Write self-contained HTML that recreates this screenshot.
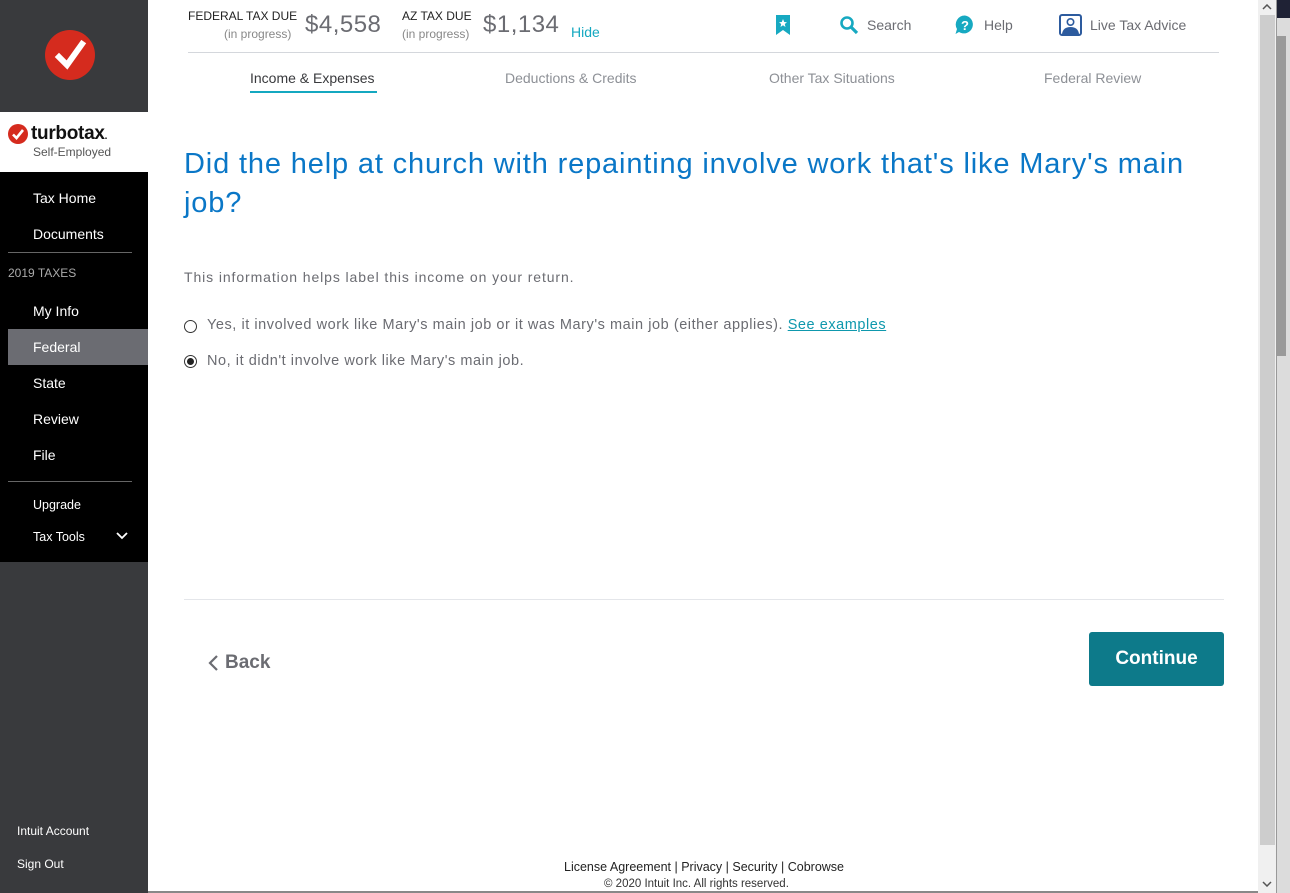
<!DOCTYPE html>
<html><head><meta charset="utf-8"><style>
*{margin:0;padding:0;box-sizing:border-box}
body{width:1290px;height:893px;overflow:hidden;font-family:"Liberation Sans",sans-serif;background:#fff;position:relative}
.side{position:absolute;left:0;top:0;width:148px;height:893px;background:#393a3d}
.logo{position:absolute;left:45px;top:30px;width:50px;height:50px;border-radius:50%;background:#d52b1e}
.brand{position:absolute;left:0;top:112px;width:148px;height:60px;background:#fff}
.nav{position:absolute;left:0;top:172px;width:148px;height:390px;background:#000}
.nav .it{position:absolute;left:33px;color:#fff;font-size:14px}
.nav .sm{font-size:12.5px}
.hr{position:absolute;left:8px;width:124px;height:1px;background:#666}
.abs{position:absolute}
.gray{color:#6b6c72}
</style></head><body>
<div class="side">
 <div class="logo"><svg width="50" height="50" viewBox="0 0 50 50"><path d="M14 27 L22 35 L37 14" stroke="#fff" stroke-width="6" fill="none" stroke-linecap="square"/></svg></div>
 <div class="brand">
  <svg class="abs" style="left:8px;top:12px" width="20" height="20" viewBox="0 0 20 20"><circle cx="10" cy="10" r="10" fill="#d52b1e"/><path d="M5 10.5 L8.5 14 L15 6" stroke="#fff" stroke-width="2.6" fill="none"/></svg>
  <div class="abs" style="left:31px;top:11px;font-size:19px;font-weight:bold;color:#111;letter-spacing:-0.3px">turbotax<span style="font-size:10px">.</span></div>
  <div class="abs" style="left:33px;top:33px;font-size:12px;color:#555">Self-Employed</div>
 </div>
 <div class="nav">
  <div class="it" style="top:18px">Tax Home</div>
  <div class="it" style="top:54px">Documents</div>
  <div class="hr" style="top:80px"></div>
  <div class="it" style="left:8px;top:94px;font-size:12px;color:#aaa">2019 TAXES</div>
  <div class="it" style="top:131px">My Info</div>
  <div class="abs" style="left:8px;top:157px;width:140px;height:36px;background:#6b6c72"></div>
  <div class="it" style="top:167px">Federal</div>
  <div class="it" style="top:203px">State</div>
  <div class="it" style="top:239px">Review</div>
  <div class="it" style="top:275px">File</div>
  <div class="hr" style="top:309px"></div>
  <div class="it sm" style="top:326px">Upgrade</div>
  <div class="it sm" style="top:358px">Tax Tools</div>
  <svg class="abs" style="left:116px;top:360px" width="12" height="8" viewBox="0 0 12 8"><path d="M1 1 L6 6 L11 1" stroke="#fff" stroke-width="1.8" fill="none"/></svg>
 </div>
 <div class="abs" style="left:17px;top:824px;color:#fff;font-size:12px">Intuit Account</div>
 <div class="abs" style="left:17px;top:857px;color:#fff;font-size:12px">Sign Out</div>
</div>

<div class="abs" style="left:188px;top:9px;font-size:12px;color:#222">FEDERAL TAX DUE</div>
<div class="abs gray" style="left:224px;top:27px;font-size:12px;color:#888">(in progress)</div>
<div class="abs" style="left:305px;top:11px;font-size:24px;color:#6b6c72;letter-spacing:0.5px">$4,558</div>
<div class="abs" style="left:402px;top:9px;font-size:12px;color:#222">AZ TAX DUE</div>
<div class="abs" style="left:402px;top:27px;font-size:12px;color:#888">(in progress)</div>
<div class="abs" style="left:483px;top:11px;font-size:24px;color:#6b6c72;letter-spacing:0.5px">$1,134</div>
<div class="abs" style="left:571px;top:24px;font-size:14px;color:#14a8c0">Hide</div>

<svg class="abs" style="left:775px;top:15px" width="16" height="20" viewBox="0 0 16 20"><path d="M1 0 H15 V20 L8 15 L1 20 Z" fill="#17a9c1"/><path d="M8 4 L9.2 7 L12 7.2 L9.8 9 L10.5 12 L8 10.3 L5.5 12 L6.2 9 L4 7.2 L6.8 7 Z" fill="#fff"/></svg>
<svg class="abs" style="left:839px;top:15px" width="20" height="20" viewBox="0 0 20 20"><circle cx="8" cy="8" r="5.5" stroke="#17a9c1" stroke-width="2.6" fill="none"/><path d="M12 12 L18 18" stroke="#17a9c1" stroke-width="3.2"/></svg>
<div class="abs gray" style="left:867px;top:17px;font-size:14px">Search</div>
<svg class="abs" style="left:955px;top:15px" width="20" height="20" viewBox="0 0 20 20"><path d="M10 0.5 A9 9 0 1 1 4 17 L0.5 19 L2 14 A9 9 0 0 1 10 0.5Z" fill="#17a9c1"/><text x="10" y="15" font-size="13" font-weight="bold" fill="#fff" text-anchor="middle" font-family="Liberation Sans">?</text></svg>
<div class="abs gray" style="left:984px;top:17px;font-size:14px">Help</div>
<svg class="abs" style="left:1059px;top:14px" width="23" height="22" viewBox="0 0 23 22"><rect x="1" y="1" width="21" height="20" rx="2" fill="none" stroke="#2d5b9e" stroke-width="2"/><circle cx="11.5" cy="8" r="3.2" fill="none" stroke="#2d5b9e" stroke-width="1.6"/><path d="M3 20 Q4 13 11.5 13 Q19 13 20 20Z" fill="#2d5b9e"/></svg>
<div class="abs gray" style="left:1090px;top:17px;font-size:14px">Live Tax Advice</div>

<div class="abs" style="left:188px;top:52px;width:1031px;height:1px;background:#d4d7dc"></div>
<div class="abs" style="left:250px;top:70px;font-size:14px;color:#393a3d">Income &amp; Expenses</div>
<div class="abs" style="left:250px;top:91px;width:127px;height:2px;background:#14a8c0"></div>
<div class="abs" style="left:505px;top:70px;font-size:14px;color:#8d9096">Deductions &amp; Credits</div>
<div class="abs" style="left:769px;top:70px;font-size:14px;color:#8d9096">Other Tax Situations</div>
<div class="abs" style="left:1044px;top:70px;font-size:14px;color:#8d9096">Federal Review</div>

<div class="abs" style="left:184px;top:145px;width:1020px;font-size:29px;line-height:39px;color:#0a77c7;letter-spacing:0.85px">Did the help at church with repainting involve work that's like Mary's main job?</div>
<div class="abs" style="left:184px;top:269px;font-size:14px;color:#6b6c72;letter-spacing:0.9px">This information helps label this income on your return.</div>
<div class="abs" style="left:184px;top:320px;width:13px;height:13px;border:1px solid #333;border-radius:50%"></div>
<div class="abs" style="left:207px;top:317px;font-size:14.5px;color:#6b6c72;letter-spacing:0.55px">Yes, it involved work like Mary's main job or it was Mary's main job (either applies). <span style="color:#0e98ad;text-decoration:underline">See examples</span></div>
<div class="abs" style="left:184px;top:355px;width:13px;height:13px;border:1px solid #333;border-radius:50%"><div style="margin:2px;width:7px;height:7px;border-radius:50%;background:#222"></div></div>
<div class="abs" style="left:207px;top:353px;font-size:14.5px;color:#6b6c72;letter-spacing:0.55px">No, it didn't involve work like Mary's main job.</div>

<div class="abs" style="left:184px;top:599px;width:1040px;height:1px;background:#e4e6ea"></div>
<svg class="abs" style="left:208px;top:655px" width="11" height="16" viewBox="0 0 11 16"><path d="M9 1 L2 8 L9 15" stroke="#6b6c72" stroke-width="2.2" fill="none"/></svg>
<div class="abs" style="left:225px;top:652px;font-size:19px;font-weight:bold;color:#6b6c72">Back</div>
<div class="abs" style="left:1089px;top:632px;width:135px;height:54px;background:#0d7a8a;border-radius:3px;color:#fff;font-size:19px;font-weight:bold;text-align:center;line-height:54px">Continue</div>

<div class="abs" style="left:564px;top:860px;font-size:12.5px;color:#222">License Agreement | Privacy | Security | Cobrowse</div>
<div class="abs" style="left:604px;top:878px;font-size:11.5px;color:#333">© 2020 Intuit Inc. All rights reserved.</div>
<div class="abs" style="left:148px;top:891px;width:1128px;height:2px;background:#888"></div>

<div class="abs" style="left:1258px;top:0;width:18px;height:893px;background:#f0f0f0"></div>
<div class="abs" style="left:1260px;top:15px;width:15px;height:830px;background:#cdcdcd"></div>
<svg class="abs" style="left:1262px;top:4px" width="10" height="6" viewBox="0 0 10 6"><path d="M1 5 L5 1 L9 5" stroke="#555" stroke-width="1.5" fill="none"/></svg>
<svg class="abs" style="left:1262px;top:881px" width="10" height="6" viewBox="0 0 10 6"><path d="M1 1 L5 5 L9 1" stroke="#555" stroke-width="1.5" fill="none"/></svg>
<div class="abs" style="left:1276px;top:0;width:14px;height:893px;background:#dcdcdc;border-left:1px solid #999"></div>
<div class="abs" style="left:1277px;top:0;width:13px;height:18px;background:#1f2235"></div>
<div class="abs" style="left:1277px;top:36px;width:9px;height:320px;background:#9a9a9a"></div>
</body></html>
